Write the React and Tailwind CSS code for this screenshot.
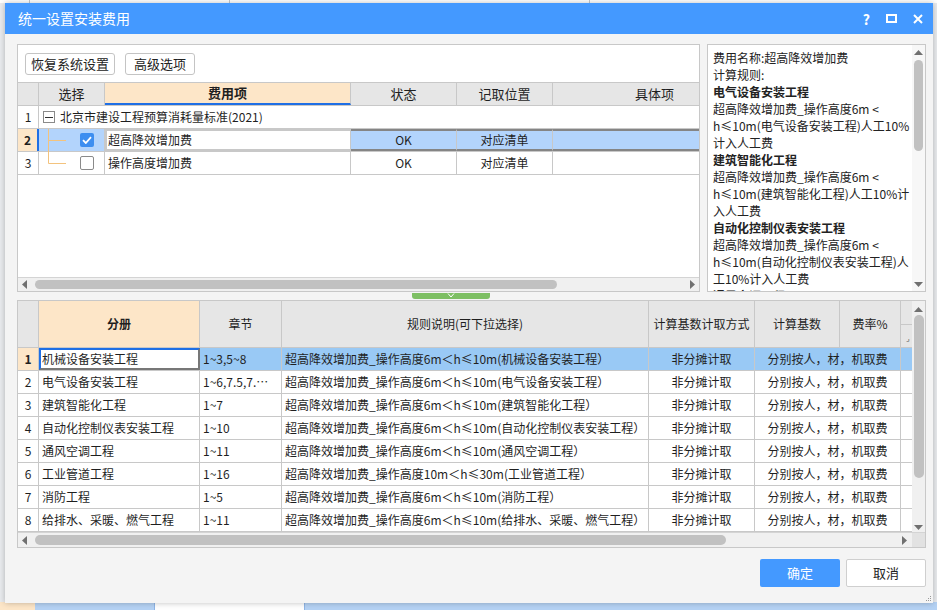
import React from 'react';

const FONT = "font-['Noto_Sans_CJK_SC',sans-serif]";

function Tri({ dir }) {
  const pts = {
    up: '0,5 4.5,0 9,5',
    down: '0,0 9,0 4.5,5',
    left: '5,0 5,9 0,4.5',
    right: '0,0 0,9 5,4.5',
  }[dir];
  const vertical = dir === 'up' || dir === 'down';
  return (
    <svg width={vertical ? 9 : 5} height={vertical ? 5 : 9} className="shrink-0">
      <polygon points={pts} fill="#707070" />
    </svg>
  );
}

function CheckBox({ checked }) {
  if (checked) {
    return (
      <div className="w-[14px] h-[14px] rounded-[2px] bg-[#3d8ef0] flex items-center justify-center">
        <svg width="10" height="8" viewBox="0 0 10 8">
          <path d="M1 4.2 L3.8 7 L9 1.2" stroke="#fff" strokeWidth="1.8" fill="none" />
        </svg>
      </div>
    );
  }
  return <div className="w-[14px] h-[14px] rounded-[2px] bg-white border border-[#8a8a8a]" />;
}

// tree lines for rows 2 and 3 of the upper table
function TreeLine({ last }) {
  return (
    <svg width="28" height="23" className="shrink-0">
      <line x1="9.5" y1="0" x2="9.5" y2={last ? 11.5 : 23} stroke="#f3c37e" strokeWidth="1" />
      <line x1="9.5" y1="11.5" x2="27" y2="11.5" stroke="#f3c37e" strokeWidth="1" />
    </svg>
  );
}

const topHead = [
  { t: '', w: 'w-[21px]', cls: 'bg-[#e6e6e6]' },
  { t: '选择', w: 'w-[66px]', cls: 'bg-[#e6e6e6] justify-center' },
  { t: '费用项', w: 'w-[246px]', cls: 'bg-[#fde6c8] justify-center font-bold border-b-2 border-b-[#1f6fe5]' },
  { t: '状态', w: 'w-[106px]', cls: 'bg-[#e6e6e6] justify-center' },
  { t: '记取位置', w: 'w-[96px]', cls: 'bg-[#e6e6e6] justify-center' },
  { t: '具体项', w: 'w-[146px]', cls: 'bg-[#e6e6e6] pl-[82px] border-r-0' },
];

const bottomRows = [
  ['机械设备安装工程', '1~3,5~8', '6m＜h≤10m'],
  ['电气设备安装工程', '1~6,7.5,7.…', '6m＜h≤10m'],
  ['建筑智能化工程', '1~7', '6m＜h≤10m'],
  ['自动化控制仪表安装工程', '1~10', '6m＜h≤10m'],
  ['通风空调工程', '1~11', '6m＜h≤10m'],
  ['工业管道工程', '1~16', '10m＜h≤30m'],
  ['消防工程', '1~5', '6m＜h≤10m'],
  ['给排水、采暖、燃气工程', '1~11', '6m＜h≤10m'],
];

const ruleLines = [
  { t: '费用名称:超高降效增加费' },
  { t: '计算规则:' },
  { t: '电气设备安装工程', b: true },
  { t: '超高降效增加费_操作高度6m <' },
  { t: 'h≤10m(电气设备安装工程)人工10%' },
  { t: '计入人工费' },
  { t: '建筑智能化工程', b: true },
  { t: '超高降效增加费_操作高度6m <' },
  { t: 'h≤10m(建筑智能化工程)人工10%计' },
  { t: '入人工费' },
  { t: '自动化控制仪表安装工程', b: true },
  { t: '超高降效增加费_操作高度6m <' },
  { t: 'h≤10m(自动化控制仪表安装工程)人' },
  { t: '工10%计入人工费' },
  { t: '通风空调工程', b: true },
];

function TopTable() {
  const cell = 'h-full flex items-center border-r border-[#c8c8c8] shrink-0';
  return (
    <div className="flex flex-col">
      <div className="flex h-[24px] border-t border-b border-[#c8c8c8] text-[13px]">
        {topHead.map((h, i) => (
          <div key={i} className={`${cell} ${h.w} ${h.cls}`}>{h.t}</div>
        ))}
      </div>
      {/* row 1: group */}
      <div className="flex h-[23px] border-b border-[#c8c8c8]">
        <div className={`${cell} w-[21px] justify-center`}>1</div>
        <div className="flex items-center flex-1 h-full">
          <div className="relative ml-[4px] w-[12px] h-[12px] border border-[#8a8a8a] bg-white flex items-center justify-center">
            <div className="w-[8px] h-[1px] bg-[#333]" />
          </div>
          <span className="ml-[5px]">北京市建设工程预算消耗量标准(2021)</span>
        </div>
      </div>
      {/* row 2: selected */}
      <div className="flex h-[23px] border-b border-[#c8c8c8] bg-[#b3d4fc]">
        <div className={`${cell} w-[21px] justify-center bg-[#fde6c8] font-bold border-r-2 border-r-[#1f6fe5]`}>2</div>
        <div className={`${cell} w-[66px] items-start`}>
          <TreeLine />
          <div className="ml-[13px] self-center"><CheckBox checked /></div>
        </div>
        <div className={`${cell} w-[246px] bg-white border-2 border-[#7a7a7a] pl-[1px]`}>超高降效增加费</div>
        <div className={`${cell} w-[106px] justify-center border-y-2 border-y-[#858585]`}>OK</div>
        <div className={`${cell} w-[96px] justify-center border-y-2 border-y-[#858585]`}>对应清单</div>
        <div className={`${cell} w-[146px] border-r-0 border-y-2 border-y-[#858585]`} />
      </div>
      {/* row 3 */}
      <div className="flex h-[23px] border-b border-[#c8c8c8]">
        <div className={`${cell} w-[21px] justify-center`}>3</div>
        <div className={`${cell} w-[66px] items-start`}>
          <TreeLine last />
          <div className="ml-[13px] self-center"><CheckBox /></div>
        </div>
        <div className={`${cell} w-[246px] pl-[3px]`}>操作高度增加费</div>
        <div className={`${cell} w-[106px] justify-center`}>OK</div>
        <div className={`${cell} w-[96px] justify-center`}>对应清单</div>
        <div className={`${cell} w-[146px] border-r-0`} />
      </div>
    </div>
  );
}

function BottomTable() {
  const cell = 'h-full flex items-center border-r border-[#c8c8c8] shrink-0';
  return (
    <div className="flex flex-col flex-1">
      <div className="flex h-[47px] border-b border-[#c8c8c8] bg-[#e6e6e6]">
        <div className={`${cell} w-[21px]`} />
        <div className={`${cell} w-[161px] justify-center bg-[#fde6c8] font-bold`}>分册</div>
        <div className={`${cell} w-[82px] justify-center`}>章节</div>
        <div className={`${cell} w-[367px] justify-center`}>规则说明(可下拉选择)</div>
        <div className={`${cell} w-[106px] justify-center`}>计算基数计取方式</div>
        <div className={`${cell} w-[85px] justify-center`}>计算基数</div>
        <div className={`${cell} w-[61px] justify-center`}>费率%</div>
        <div className="h-full w-[11px] flex flex-col shrink-0">
          <div className="h-[24px] border-b border-[#c8c8c8]" />
          <div className="flex-1 flex items-end justify-end pr-[2px] pb-[5px] text-[8px] leading-none text-[#555]">⌟</div>
        </div>
      </div>
      {bottomRows.map((r, i) => {
        const sel = i === 0;
        const hl = sel ? 'bg-[#99c9f5]' : '';
        return (
          <div key={i} className="flex h-[23px] border-b border-[#c8c8c8] bg-white">
            <div className={`${cell} w-[21px] justify-center ${sel ? 'bg-[#fde6c8] font-bold' : ''}`}>{i + 1}</div>
            <div
              className={`${cell} w-[161px] ${
                sel
                  ? 'border-t-2 border-l-2 border-r-2 border-b-2 border-t-[#1f6fe5] border-l-[#1f6fe5] border-r-[#777] border-b-[#777] pl-[1px]'
                  : 'pl-[3px]'
              }`}
            >
              {r[0]}
            </div>
            <div className={`${cell} w-[82px] pl-[3px] whitespace-nowrap overflow-hidden ${hl}`}>{r[1]}</div>
            <div className={`${cell} w-[367px] pl-[3px] whitespace-nowrap overflow-hidden ${hl}`}>
              超高降效增加费_操作高度{r[2]}({r[0]}）
            </div>
            <div className={`${cell} w-[106px] justify-center ${hl}`}>非分摊计取</div>
            <div className={`${cell} w-[146px] justify-center ${hl}`}>分别按人，材，机取费</div>
            <div className={`h-full w-[11px] shrink-0 ${hl}`} />
          </div>
        );
      })}
    </div>
  );
}

export default function App() {
  return (
    <div className={`relative w-[937px] h-[610px] overflow-hidden bg-[#e9ebee] text-[#1f1f1f] ${FONT}`}>
      {/* application behind the dialog */}
      <div className="flex flex-col h-full">
        <div className="h-[3px] bg-white flex">
          <div className="w-[30px] border-r border-[#c8c8c8]" />
          <div className="w-[200px] border-r border-[#c8c8c8]" />
          <div className="w-[360px] border-r border-[#c8c8c8]" />
        </div>
        <div className="flex-1" />
        <div className="h-[8px] bg-[#b5d2f4] flex">
          <div className="w-[35px] bg-[#fde6c8]" />
          <div className="w-[120px] border-r border-[#8fb5e6]" />
          <div className="w-[150px] border-r border-[#8fb5e6] bg-white" />
        </div>
      </div>

      {/* dialog window */}
      <div className="absolute left-[5px] top-[3px] w-[928px] h-[600px] bg-[#f4f4f4] flex flex-col shadow-[0_0_6px_rgba(0,0,0,0.25)]">
        <div className="h-[31px] bg-[#4499ff] flex items-center pl-[13px] pr-[10px] text-white shrink-0">
          <span className="text-[14px]">统一设置安装费用</span>
          <div className="ml-auto flex items-center gap-[16px]">
            <span className="text-[14px] font-bold leading-none">?</span>
            <div className="w-[11px] h-[9px] border-2 border-white" />
            <svg width="10" height="10" viewBox="0 0 10 10">
              <path d="M1 1 L9 9 M9 1 L1 9" stroke="#fff" strokeWidth="2" />
            </svg>
          </div>
        </div>

        <div className="flex flex-col pl-[12px] pr-[7px] pt-[10px] flex-1 text-[12px]">
          {/* upper area */}
          <div className="flex gap-[7px] h-[248px]">
            <div className="w-[683px] h-full border border-[#c8c8c8] bg-white flex flex-col">
              <div className="h-[37px] flex items-start gap-[10px] pl-[7px] pt-[8px] shrink-0">
                <button className="h-[22px] px-[5px] border border-[#c4c4c4] rounded-[3px] bg-white text-[13px] text-[#222]">恢复系统设置</button>
                <button className="h-[22px] px-[8px] border border-[#c4c4c4] rounded-[3px] bg-white text-[13px] text-[#222]">高级选项</button>
              </div>
              <TopTable />
              <div className="flex-1" />
              <div className="h-[14px] border-t border-[#d4d4d4] bg-[#f0f0f0] flex items-center pl-[4px] pr-[4px]">
                <Tri dir="left" />
                <div className="ml-[8px] w-[522px] h-[9px] rounded-full bg-[#c1c1c1]" />
                <div className="flex-1" />
                <Tri dir="right" />
              </div>
            </div>

            <div className="w-[219px] h-full border border-[#c8c8c8] bg-white flex overflow-hidden">
              <div className="flex-1 pl-[5px] pt-[4px] text-[12px] leading-[17px] text-[#222] overflow-hidden">
                {ruleLines.map((l, i) => (
                  <div key={i} className={`whitespace-nowrap ${l.b ? 'font-bold' : ''}`}>{l.t}</div>
                ))}
              </div>
              <div className="w-[13px] h-full bg-[#f7f7f7] flex flex-col items-center pt-[5px] pb-[4px]">
                <Tri dir="up" />
                <div className="mt-[5px] w-[9px] h-[91px] rounded-full bg-[#c1c1c1]" />
                <div className="flex-1" />
                <Tri dir="down" />
              </div>
            </div>
          </div>

          {/* splitter */}
          <div className="h-[8px] flex items-start">
            <div className="ml-[395px] mt-[1px] w-[78px] h-[6px] rounded-b-[3px] bg-[#7dbf63] flex justify-center">
              <svg width="8" height="5" viewBox="0 0 8 5">
                <path d="M1 0.5 L4 4 L7 0.5" stroke="#fff" strokeWidth="1" fill="none" />
              </svg>
            </div>
          </div>

          {/* lower table */}
          <div className="w-[909px] h-[248px] border border-[#c8c8c8] bg-white flex flex-col">
            <div className="flex flex-1">
              <BottomTable />
              <div className="w-[13px] bg-[#f0f0f0] flex flex-col items-center pt-[6px] pb-[2px]">
                <Tri dir="up" />
                <div className="mt-[3px] w-[10px] h-[163px] rounded-full bg-[#c1c1c1]" />
                <div className="flex-1" />
                <Tri dir="down" />
              </div>
            </div>
            <div className="h-[15px] border-t border-[#d4d4d4] flex">
              <div className="flex-1 bg-[#f0f0f0] flex items-center pl-[4px] pr-[5px]">
                <Tri dir="left" />
                <div className="ml-[8px] w-[691px] h-[10px] rounded-full bg-[#c1c1c1]" />
                <div className="flex-1" />
                <Tri dir="right" />
              </div>
              <div className="w-[13px] bg-[#e2e2e2]" />
            </div>
          </div>

          {/* footer buttons */}
          <div className="flex justify-end gap-[6px] mt-[11px]">
            <button className="w-[80px] h-[28px] bg-[#4499ff] text-white text-[13px] rounded-[2px]">确定</button>
            <button className="w-[80px] h-[28px] bg-white border border-[#cfcfcf] text-[#222] text-[13px] rounded-[2px]">取消</button>
          </div>
        </div>
        <div className="absolute right-[2px] bottom-[2px] flex flex-col items-end gap-[1px]">
          <div className="w-[1px] h-[1px] bg-[#999]" />
          <div className="flex gap-[1px]"><div className="w-[1px] h-[1px] bg-[#999]" /><div className="w-[1px] h-[1px] bg-[#999]" /></div>
          <div className="flex gap-[1px]"><div className="w-[1px] h-[1px] bg-[#999]" /><div className="w-[1px] h-[1px] bg-[#999]" /><div className="w-[1px] h-[1px] bg-[#999]" /></div>
        </div>
      </div>
    </div>
  );
}
